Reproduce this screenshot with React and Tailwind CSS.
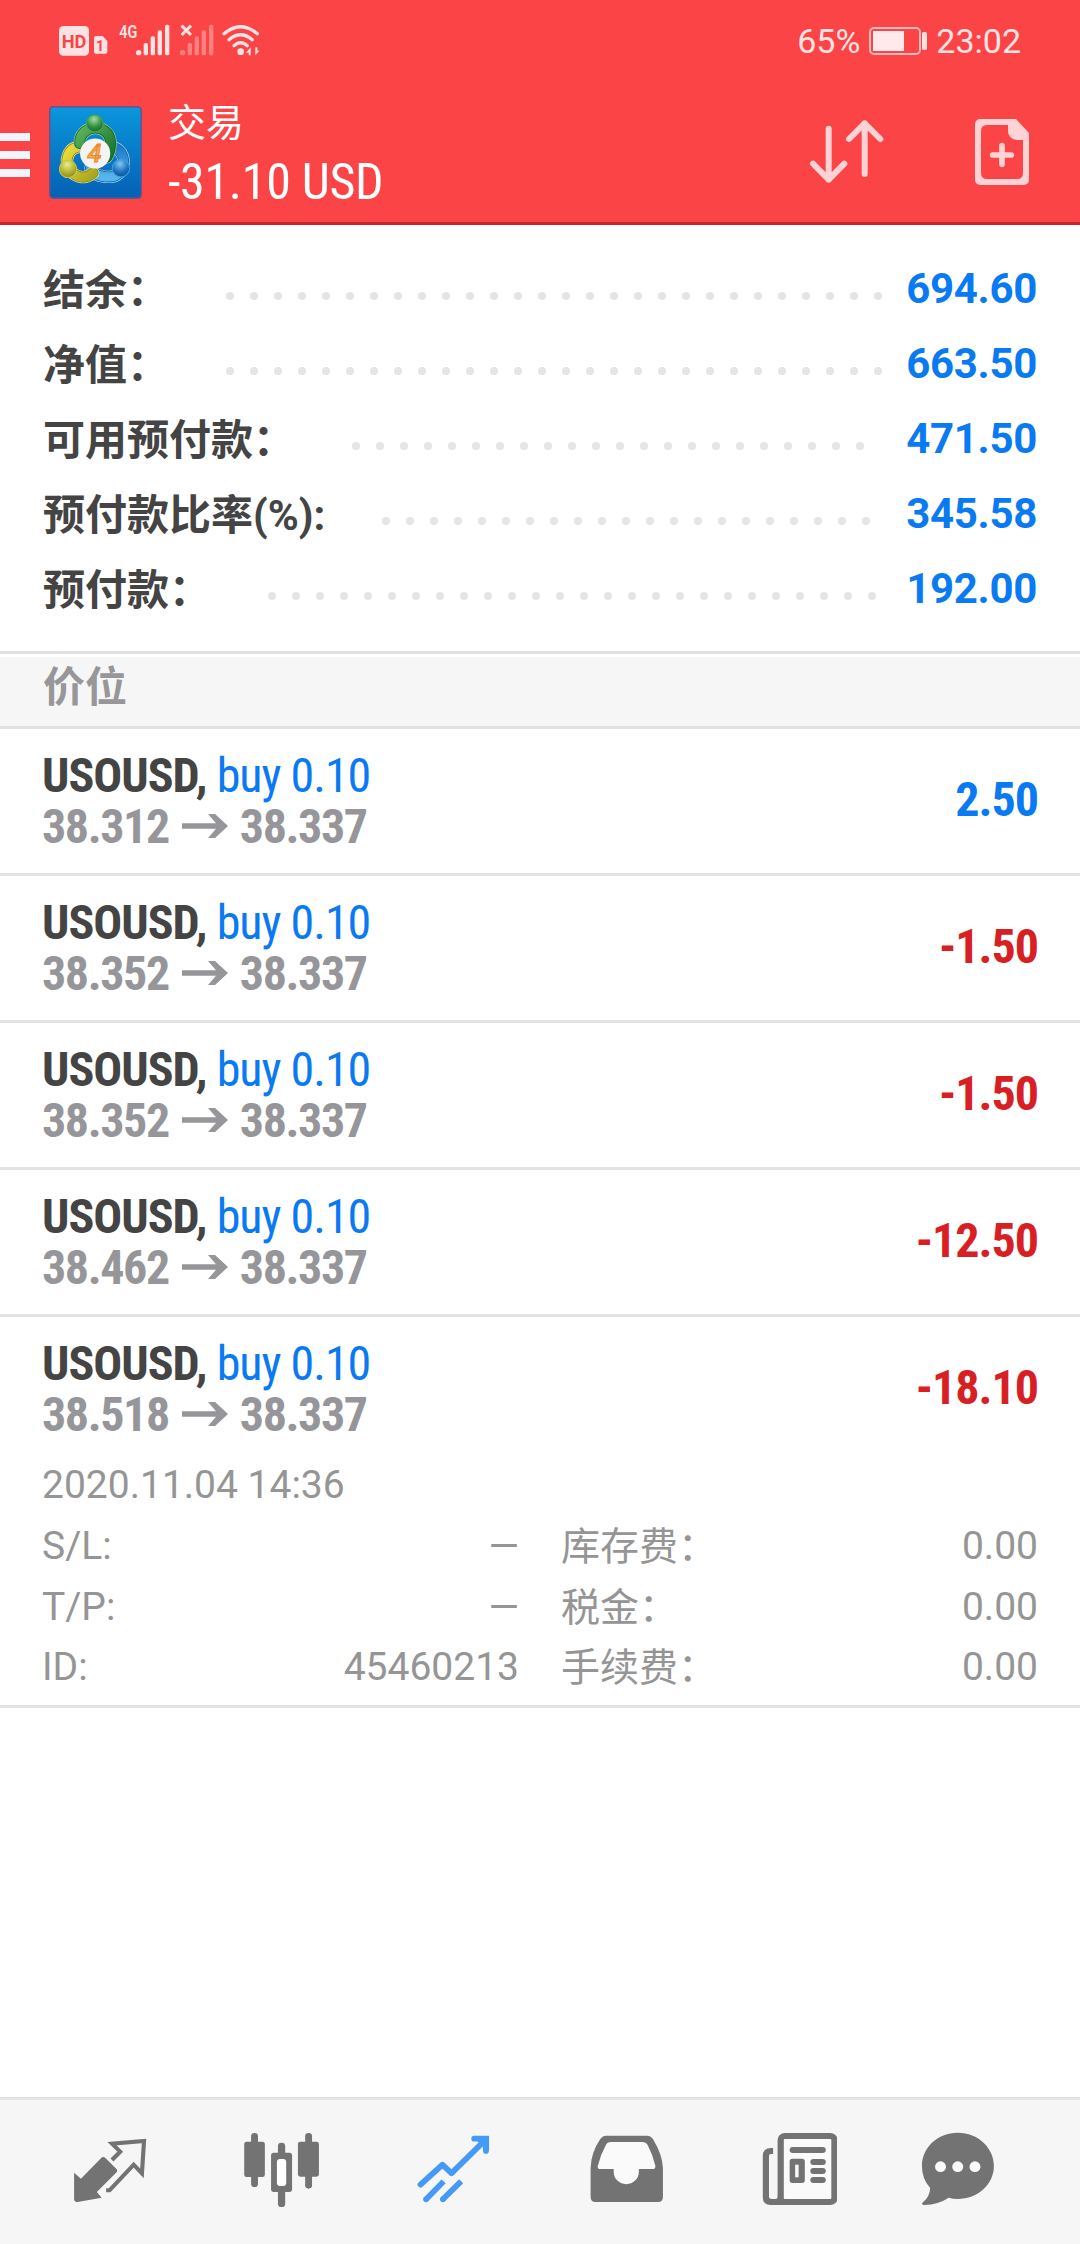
const account = [
  { label: "结余：", value: "694.60", dots: 28 },
  { label: "净值：", value: "663.50", dots: 28 },
  { label: "可用预付款：", value: "471.50", dots: 22 },
  { label: "预付款比率(%):", value: "345.58", dots: 21 },
  { label: "预付款：", value: "192.00", dots: 26 },
];

const positions = [
  { id: 1, open: "38.312", profit: "2.50" },
  { id: 2, open: "38.352", profit: "-1.50" },
  { id: 3, open: "38.352", profit: "-1.50" },
  { id: 4, open: "38.462", profit: "-12.50" },
  { id: 5, open: "38.518", profit: "-18.10", expanded: true },
];

const details = [
  ["S/L:", "—", "库存费：", "0.00"],
  ["T/P:", "—", "税金：", "0.00"],
  ["ID:", "45460213", "手续费：", "0.00"],
];

function StatusBar() {
  return (
    <div className="flex h-[82px] items-center justify-between pr-[59px] pl-[58px]">
      <svg className="h-[82px] w-[204px]" viewBox="174 0 612 246" fill="#ffe3e4">
        <rect x="177" y="78" width="90" height="89" rx="13" />
        <text x="222" y="143" fontSize="56" fontWeight="700" textAnchor="middle" textLength="74" lengthAdjust="spacingAndGlyphs" fill="#f94446" fontFamily="Roboto">HD</text>
        <path d="M288 108h20l14 15v32q0 6-6 6h-28q-6 0-6-6v-41q0-6 6-6z" />
        <text x="300" y="152" fontSize="42" fontWeight="700" textAnchor="middle" fill="#f94446" fontFamily="Roboto">1</text>
        <text x="358" y="114" fontSize="55" fontWeight="600" textLength="54" lengthAdjust="spacingAndGlyphs" fontFamily="Roboto">4G</text>
        <circle cx="416" cy="158" r="8" />
        <rect x="431" y="129" width="13" height="37" rx="5" />
        <rect x="452" y="109" width="13" height="57" rx="5" />
        <rect x="473" y="91" width="13" height="75" rx="5" />
        <rect x="495" y="74" width="13" height="92" rx="5" />
        <path d="M545 77l28 28m0-28l-28 28" stroke="#ffe3e4" strokeWidth="9" />
        <g fill="#fd8083">
          <circle cx="548" cy="158" r="8" />
          <rect x="563" y="129" width="13" height="37" rx="5" />
          <rect x="584" y="109" width="13" height="57" rx="5" />
          <rect x="605" y="91" width="13" height="75" rx="5" />
          <rect x="627" y="74" width="13" height="92" rx="5" />
        </g>
        <g fill="none" stroke="#ffe3e4" strokeWidth="10" strokeLinecap="round">
          <path d="M672 101Q722 59 772 101" />
          <path d="M687 119Q722 89 757 119" />
          <path d="M702 137Q722 120 742 137" />
        </g>
        <circle cx="722" cy="155" r="10" />
        <path d="M738 158l14-16v24h-6v-8zM778 152l-12 14v-24h6v10z" />
      </svg>
      <div className="flex items-center text-[34px] leading-none text-[#ffe3e4]">
        <span>65%</span>
        <svg className="mr-[9px] ml-[9px] h-[28px] w-[58px]" viewBox="0 0 58 28">
          <rect x="1" y="1" width="50" height="26" rx="4" fill="none" stroke="#ffb9ba" strokeWidth="2" />
          <rect x="4" y="4" width="31" height="20" fill="#ffe9ea" />
          <rect x="53" y="5" width="5" height="18" rx="2" fill="#ffe3e4" />
        </svg>
        <span>23:02</span>
      </div>
    </div>
  );
}

function Logo() {
  return (
    <svg className="h-[93px] w-[93px]" viewBox="0 0 278 278">
      <defs>
        <linearGradient id="sky" x1="0" y1="0" x2="0" y2="1">
          <stop offset="0" stopColor="#0a97dd" />
          <stop offset="1" stopColor="#0560b4" />
        </linearGradient>
        <linearGradient id="green" x1="0" y1="0" x2="1" y2="1">
          <stop offset="0" stopColor="#5fb35c" />
          <stop offset="1" stopColor="#14732c" />
        </linearGradient>
        <linearGradient id="gold" x1="0" y1="0" x2="1" y2="1">
          <stop offset="0" stopColor="#efdc38" />
          <stop offset="1" stopColor="#a9a51e" />
        </linearGradient>
        <linearGradient id="azure" x1="0" y1="0" x2="0" y2="1">
          <stop offset="0" stopColor="#1c7ac6" />
          <stop offset="1" stopColor="#55b5ec" />
        </linearGradient>
        <radialGradient id="ballGreen" cx=".45" cy=".25" r=".8">
          <stop offset="0" stopColor="#a5dba0" />
          <stop offset=".6" stopColor="#2f8d41" />
          <stop offset="1" stopColor="#17652b" />
        </radialGradient>
        <radialGradient id="ballGold" cx=".45" cy=".25" r=".8">
          <stop offset="0" stopColor="#ecec8c" />
          <stop offset=".6" stopColor="#b0b02c" />
          <stop offset="1" stopColor="#7d8420" />
        </radialGradient>
        <radialGradient id="ballBlue" cx=".45" cy=".25" r=".8">
          <stop offset="0" stopColor="#7ec8f4" />
          <stop offset=".6" stopColor="#1c70bb" />
          <stop offset="1" stopColor="#0d4f93" />
        </radialGradient>
      </defs>
      <rect x="2" y="2" width="274" height="274" rx="12" fill="url(#sky)" stroke="#71508a" strokeWidth="5" />
      <g fill="none" strokeLinecap="round">
        <path d="M188 122C238 132 234 212 180 212C150 212 132 204 124 186" stroke="#a9d8f3" strokeWidth="37" />
        <path d="M188 122C238 132 234 212 180 212C150 212 132 204 124 186" stroke="#135f9f" strokeWidth="33" />
        <path d="M188 122C238 132 234 212 180 212C150 212 132 204 124 186" stroke="url(#azure)" strokeWidth="28" />
        <path d="M98 122C54 122 44 166 64 192C82 218 112 218 132 200" stroke="#ece79c" strokeWidth="37" />
        <path d="M98 122C54 122 44 166 64 192C82 218 112 218 132 200" stroke="#85851c" strokeWidth="33" />
        <path d="M98 122C54 122 44 166 64 192C82 218 112 218 132 200" stroke="url(#gold)" strokeWidth="28" />
        <path d="M92 112C90 54 180 48 184 108C184 130 180 142 172 154" stroke="#9bd397" strokeWidth="37" />
        <path d="M92 112C90 54 180 48 184 108C184 130 180 142 172 154" stroke="#135f26" strokeWidth="33" />
        <path d="M92 112C90 54 180 48 184 108C184 130 180 142 172 154" stroke="url(#green)" strokeWidth="28" />
      </g>
      <circle cx="137" cy="52" r="25" fill="url(#ballGreen)" stroke="#48a34f" strokeWidth="3" />
      <circle cx="57" cy="188" r="26" fill="url(#ballGold)" stroke="#c8c648" strokeWidth="3" />
      <circle cx="215" cy="186" r="26" fill="url(#ballBlue)" stroke="#3f9ddd" strokeWidth="3" />
      <circle cx="138" cy="142" r="45" fill="#f6f3f5" />
      <text x="136" y="168" fontSize="76" fontWeight="500" fontStyle="italic" textAnchor="middle" fill="#f6b350" stroke="#e8862a" strokeWidth="3" fontFamily="Roboto">4</text>
    </svg>
  );
}

function Header() {
  return (
    <header className="h-[225px] border-b-[3px] border-[#c6252c] bg-[#fa4446]">
      <StatusBar />
      <div className="flex h-[140px] items-start">
        <div className="mt-[51px] flex w-[30px] flex-col gap-[10px]">
          <div className="h-2 bg-[#f5f3fb]" />
          <div className="h-2 bg-[#f5f3fb]" />
          <div className="h-2 bg-[#f5f3fb]" />
        </div>
        <div className="mt-[24px] ml-[19px]">
          <Logo />
        </div>
        <div className="mt-[14px] ml-[26px] flex flex-col whitespace-nowrap text-white">
          <span className="text-[38px] leading-[54px]">交易</span>
          <span className="text-[50px] leading-[64px] tracking-[-0.3px] font-stretch-condensed">-31.10 USD</span>
        </div>
        <div className="mt-[36px] mr-[49px] ml-auto flex gap-[88px]">
          <svg className="h-[68px] w-[76px]" viewBox="145 357 228 204" fill="none" stroke="#ffd3d6" strokeWidth="18" strokeLinecap="round" strokeLinejoin="round">
            <path d="M204 389V542M157 494L204 542L251 494" />
            <path d="M312 525V373M265 420L312 373L359 420" />
          </svg>
          <svg className="h-[68px] w-[58px]" viewBox="639 357 174 204">
            <path fill="#ffd3d6" fillRule="evenodd" d="M662 360H768L807 402V541Q807 558 790 558H662Q645 558 645 541V377Q645 360 662 360ZM682 378Q663 378 663 397V521Q663 540 682 540H771Q789 540 789 521V423H770Q744 419 744 396V378Z" />
            <path d="M698 468H754M726 440V496" stroke="#ffd3d6" strokeWidth="17" strokeLinecap="round" />
          </svg>
        </div>
      </div>
    </header>
  );
}

function AccountRow({ label, value, dots }) {
  return (
    <div className="flex h-[75px] items-center text-[42px] font-bold whitespace-nowrap">
      <span className="mt-[3px] text-[#444444]">{label}</span>
      <div className="mt-[15px] ml-[57px] flex gap-[16px]">
        {Array.from({ length: dots }, (_, i) => (
          <i key={i} className="h-2 w-2 rounded-full bg-[#e5e5e5]" />
        ))}
      </div>
      <span className="ml-auto tracking-[-0.3px] text-[#0a7af2]">{value}</span>
    </div>
  );
}

function Position({ open, profit, expanded }) {
  return (
    <div className="border-b-[3px] border-[#e3e3e3] px-[42px]">
      <div className="flex h-[144px] items-center justify-between text-[48px] leading-[51px] font-bold tracking-[-1px] whitespace-nowrap font-stretch-condensed">
        <div className="-mt-[1px]">
          <div className="text-[#444444]">
            USOUSD, <span className="font-normal text-[#0a7af2]">buy 0.10</span>
          </div>
          <div className="flex items-center tracking-[-1.4px] text-[#96969a]">
            {open}
            <svg className="mr-[12px] ml-[13px] h-[26px] w-[46px]" viewBox="0 0 46 26">
              <path fill="#96969a" d="M0 10.200H34L26 1H33L46 13L33 25H26L34 15.800H0z" />
            </svg>
            38.337
          </div>
        </div>
        <span className={profit.startsWith("-") ? "-mt-[3px] text-[#d82024]" : "-mt-[3px] text-[#0a7af2]"}>{profit}</span>
      </div>
      {expanded && (
        <div className="h-[244px] text-[39px] whitespace-nowrap text-[#959595]">
          <div className="h-[55px] leading-[48px]">2020.11.04 14:36</div>
          {details.map(([name, value, fee, amount]) => (
            <div key={name} className="flex h-[60.5px] leading-[61px]">
              <span>{name}</span>
              <span className="ml-auto">{value}</span>
              <span className="mt-[1px] ml-[42px] w-[240px]">{fee}</span>
              <span className="w-[237px] text-right">{amount}</span>
            </div>
          ))}
        </div>
      )}
    </div>
  );
}

function TabBar() {
  return (
    <nav className="mt-auto flex h-[147px] items-start gap-[94px] border-t-[3px] border-[#e2e2e2] bg-[#f6f6f6] pt-[30px] pl-[71px] text-[#737373]">
      {/* quotes */}
      <svg className="h-[78px] w-[78px] shrink-0" viewBox="206 150 226.5 234" preserveAspectRatio="none" fill="currentColor">
        <path d="M215 278L235 296L293 235Q299 228 306 234L338 267Q343 272 337 278L281 336L295 353L225 366Q215 366 215 356Z" />
        <path d="M325 240L349 215L325 191L418 183L412 280L388 254L318 331H308" fill="none" stroke="currentColor" strokeWidth="12" />
      </svg>
      {/* charts */}
      <svg className="h-[78px] w-[78px] shrink-0" viewBox="705.5 150 226.5 234" preserveAspectRatio="none" fill="currentColor">
        <rect x="709" y="185" width="60" height="106" rx="7" />
        <rect x="729" y="159" width="20" height="162" rx="10" />
        <rect x="865" y="185" width="61" height="105" rx="7" />
        <rect x="886" y="159" width="20" height="167" rx="10" />
        <rect x="807" y="188" width="21" height="193" rx="10" />
        <rect x="787" y="218" width="61" height="118" rx="8" />
        <rect x="804" y="237" width="27" height="81" rx="9" fill="#fff" />
      </svg>
      {/* trade */}
      <svg className="h-[78px] w-[78px] shrink-0" viewBox="1205 150 226.5 234" preserveAspectRatio="none" fill="none" stroke="#459af7" strokeWidth="17">
        <path d="M1221 314L1285 254L1311 280L1406 183" strokeLinecap="round" strokeLinejoin="round" />
        <path d="M1377 176H1411V213" strokeLinecap="round" />
        <path d="M1377 168H1420V213L1395 196Z" fill="#459af7" stroke="none" />
        <path d="M1237 358L1288 304M1286 358L1339 304" />
        <path d="M1237 358h.1M1286 358h.1" strokeLinecap="round" />
      </svg>
      {/* history */}
      <svg className="h-[78px] w-[78px] shrink-0" viewBox="136.500 150 226.500 234" preserveAspectRatio="none" fill="currentColor">
        <path d="M192 167H312Q321 167 328 177Q356 225 357 264V351Q357 366 343 366H161Q147 366 147 351V264Q148 218 175 177Q182 167 192 167Z" />
        <path d="M206 186H296Q308 186 313 196Q327 224 335 257Q336 267 327 267H287V276A36 36 0 0 1 214 276V267H175Q166 267 168 257Q175 226 191 196Q195 186 206 186Z" fill="#fafafa" />
      </svg>
      {/* news */}
      <svg className="h-[78px] w-[78px] shrink-0" viewBox="636 150 226.500 234" preserveAspectRatio="none" fill="currentColor">
        <rect x="699" y="168" width="156" height="198" rx="12" fill="#fafafa" stroke="currentColor" strokeWidth="18" />
        <path d="M677 204V222H671Q665 222 665 228V349Q665 357 673 357H683Q691 357 691 349V340L710 375H670Q647 375 647 352V228Q647 204 671 204Z" />
        <rect x="725" y="201" width="105" height="18" rx="9" />
        <rect x="725" y="236" width="44" height="73" rx="8" />
        <rect x="741" y="254" width="10" height="38" fill="#fafafa" />
        <rect x="785" y="237" width="45" height="18" rx="9" />
        <rect x="785" y="264" width="45" height="18" rx="9" />
        <rect x="785" y="291" width="45" height="18" rx="9" />
      </svg>
      {/* chat */}
      <svg className="-ml-[12px] h-[78px] w-[78px] shrink-0" viewBox="1100.500 150 226.500 234" preserveAspectRatio="none" fill="currentColor">
        <path d="M1213 158C1273 158 1318 204 1318 258C1318 313 1271 357 1213 357Q1198 357 1187 353Q1156 374 1116 375Q1105 374 1112 367Q1132 350 1133 324Q1109 297 1109 258C1109 203 1154 158 1213 158Z" />
        <g fill="#fafafa">
          <circle cx="1163" cy="260" r="16" />
          <circle cx="1213" cy="260" r="16" />
          <circle cx="1263" cy="260" r="16" />
        </g>
      </svg>
    </nav>
  );
}

export default function App() {
  return (
    <div className="flex h-[2244px] w-[1080px] flex-col overflow-hidden bg-white font-['Roboto','Noto_Sans_CJK_SC',sans-serif]">
      <Header />
      <section className="h-[429px] border-b-[3px] border-[#e1e1e1] px-[43px] pt-[26px]">
        {account.map((row) => (
          <AccountRow key={row.label} {...row} />
        ))}
      </section>
      <div className="mt-[3px] h-[72px] border-b-[3px] border-[#e1e1e1] bg-[#f6f6f6] px-[43px] text-[42px] leading-[62px] font-bold text-[#97979a]">
        价位
      </div>
      {positions.map((p) => (
        <Position key={p.id} {...p} />
      ))}
      <TabBar />
    </div>
  );
}
